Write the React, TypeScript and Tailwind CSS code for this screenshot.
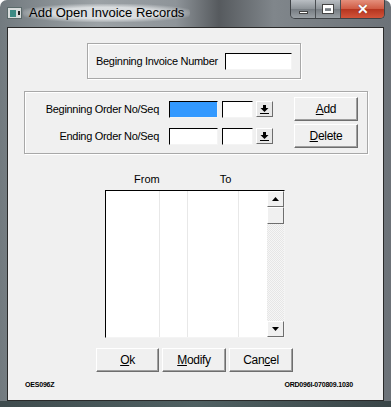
import React from "react";

const sunken = "border border-t-[#000] border-l-[#000] border-r-[#f4f4f4] border-b-[#f4f4f4] bg-white";

function DropArrow() {
  return (
    <div className="w-[17px] h-[16px] bg-[#e8e8e8] border border-t-white border-l-white border-r-[#6d6d6d] border-b-[#6d6d6d] flex items-center justify-center">
      <svg width="9" height="9" viewBox="0 0 9 9">
        <rect x="3" y="0" width="3" height="3" fill="#000" />
        <polygon points="0.5,3 8.5,3 4.5,7" fill="#000" />
        <rect x="0" y="8" width="9" height="1" fill="#000" />
      </svg>
    </div>
  );
}

function Btn({ label, u, w }: { label: string; u: number; w: string }) {
  return (
    <div className={`${w} h-[24px] bg-[#f0f0f0] border border-t-white border-l-white border-r-[#6e6e6e] border-b-[#6e6e6e] shadow-[inset_-1px_-1px_0_#a0a0a0] flex items-center justify-center text-[12px] tracking-[-0.3px] text-black`}>
      <span>
        {label.slice(0, u)}
        <span className="underline">{label[u]}</span>
        {label.slice(u + 1)}
      </span>
    </div>
  );
}

function OrderRow({ label, blue, btn }: { label: string; blue?: boolean; btn: React.ReactNode }) {
  return (
    <div className="flex items-center h-[24px]">
      <div className="w-[134px] text-right text-[11px] tracking-[-0.3px] whitespace-nowrap text-black">{label}</div>
      <div className={`ml-[10px] w-[49px] h-[17px] border border-t-[#000] border-l-[#000] border-r-[#f4f4f4] border-b-[#f4f4f4] ${blue ? "bg-[#3399ff]" : "bg-white"}`} />
      <div className={`ml-[4px] w-[31px] h-[17px] ${sunken}`} />
      <div className="ml-[3px]">
        <DropArrow />
      </div>
      <div className="ml-[21px]">{btn}</div>
    </div>
  );
}

export default function App() {
  return (
    <div
      className="w-[391px] h-[407px] rounded-t-[7px] overflow-hidden flex flex-col bg-[linear-gradient(90deg,#727a7f_0%,#9ca2a6_25%,#8e9499_45%,#565a5e_56%,#80868b_70%,#6c7278_100%)]"
      style={{ fontFamily: '"Liberation Sans", Arial, sans-serif' }}
    >
      {/* title bar */}
      <div className="h-[27px] flex items-start relative">
        <div className="mt-[7px] ml-[7px] w-[15px] h-[12px] bg-[#d8dcdc] border border-[#5a6a6a] flex items-center pl-[2px]">
          <div className="w-[6px] h-[7px] bg-[#3c8a84]" />
          <div className="ml-[2px] w-[2px] h-[4px] bg-[#222]" />
        </div>
        <div className="ml-[1px] mt-[4px] px-[6px] rounded-full bg-[radial-gradient(ellipse_at_center,rgba(225,228,230,0.9)_45%,rgba(225,228,230,0)_78%)] text-[13px] text-black leading-[18px]">
          Add Open Invoice Records
        </div>
        <div className="absolute right-[6px] top-0 flex h-[19px] rounded-b-[5px] border border-t-0 border-[#3e4246] overflow-hidden">
          <div className="w-[25px] h-full bg-[linear-gradient(#b9bec3,#8c9297_50%,#767c82_51%,#9aa0a5)] border-r border-[#4a4e52] flex items-center justify-center">
            <div className="w-[9px] h-[3px] bg-white border border-[#444] mt-[6px]" />
          </div>
          <div className="w-[25px] h-full bg-[linear-gradient(#b9bec3,#8c9297_50%,#767c82_51%,#9aa0a5)] border-r border-[#4a4e52] flex items-center justify-center">
            <div className="w-[10px] h-[8px] border-[2px] border-white border-t-[3px] outline outline-1 outline-[#444]" />
          </div>
          <div className="w-[43px] h-full bg-[linear-gradient(#e48f7c,#cf5a42_50%,#b5351f_51%,#d2543a)] flex items-center justify-center text-white font-bold text-[14px] leading-none [text-shadow:0_0_1px_#5a1a10]">
            ✕
          </div>
        </div>
      </div>

      {/* client */}
      <div className="mx-[7px] h-[374px] border border-[#2a2a2a] bg-[#f0f0f0] flex flex-col relative text-black">
        {/* invoice group */}
        <div className="mt-[15px] ml-[79px] w-[214px] h-[36px] border border-[#a8a8a8] shadow-[inset_1px_1px_0_white,1px_1px_0_white] flex items-center">
          <span className="ml-[8px] text-[11px] tracking-[-0.3px] whitespace-nowrap">Beginning Invoice Number</span>
          <div className={`ml-[7px] w-[67px] h-[17px] ${sunken}`} />
        </div>

        {/* order group */}
        <div className="mt-[12px] ml-[16px] w-[344px] h-[63px] border border-[#a8a8a8] shadow-[inset_1px_1px_0_white,1px_1px_0_white] flex flex-col pt-[5px] gap-[3px]">
          <OrderRow label="Beginning Order No/Seq" blue btn={<Btn label="Add" u={0} w="w-[64px]" />} />
          <OrderRow label="Ending Order No/Seq" btn={<Btn label="Delete" u={0} w="w-[64px]" />} />
        </div>

        {/* list headers */}
        <div className="mt-[18px] ml-[126px] flex text-[11px] leading-[14px]">
          <span>From</span>
          <span className="ml-[60px]">To</span>
        </div>

        {/* list */}
        <div className="mt-[4px] ml-[97px] w-[180px] h-[148px] border border-t-[#000] border-l-[#000] border-r-[#f4f4f4] border-b-[#f4f4f4] bg-white flex">
          <div className="w-[54px] border-r border-[#e8e8e8]" />
          <div className="w-[28px] border-r border-[#e8e8e8]" />
          <div className="w-[52px] border-r border-[#e8e8e8]" />
          <div className="w-[28px]" />
          <div className="w-[17px] h-full bg-[repeating-conic-gradient(#f6f6f6_0_25%,#e6e6e6_0_50%)] bg-[length:2px_2px] flex flex-col">
            <div className="h-[16px] bg-[#f0f0f0] border border-t-white border-l-white border-r-[#6e6e6e] border-b-[#6e6e6e] flex items-center justify-center">
              <svg width="7" height="4" viewBox="0 0 7 4"><polygon points="0,4 7,4 3.5,0" fill="#000" /></svg>
            </div>
            <div className="h-[17px] bg-[#f0f0f0] border border-t-white border-l-white border-r-[#6e6e6e] border-b-[#6e6e6e]" />
            <div className="flex-1" />
            <div className="h-[16px] bg-[#f0f0f0] border border-t-white border-l-white border-r-[#6e6e6e] border-b-[#6e6e6e] flex items-center justify-center">
              <svg width="7" height="4" viewBox="0 0 7 4"><polygon points="0,0 7,0 3.5,4" fill="#000" /></svg>
            </div>
          </div>
        </div>

        {/* bottom buttons */}
        <div className="mt-[10px] ml-[88px] flex gap-[3px]">
          <Btn label="Ok" u={0} w="w-[63px]" />
          <Btn label="Modify" u={0} w="w-[64px]" />
          <Btn label="Cancel" u={3} w="w-[64px]" />
        </div>

        {/* footer */}
        <div className="mt-[8px] mx-[17px] flex justify-between text-[7px] font-bold tracking-[-0.2px] leading-[10px]">
          <span>OES096Z</span>
          <span className="mr-[13px]">ORD096I-070809.1030</span>
        </div>
      </div>
      <div className="flex-1 bg-[linear-gradient(90deg,#3f4c4e,#4f6062_50%,#3a4648)]" />
    </div>
  );
}
